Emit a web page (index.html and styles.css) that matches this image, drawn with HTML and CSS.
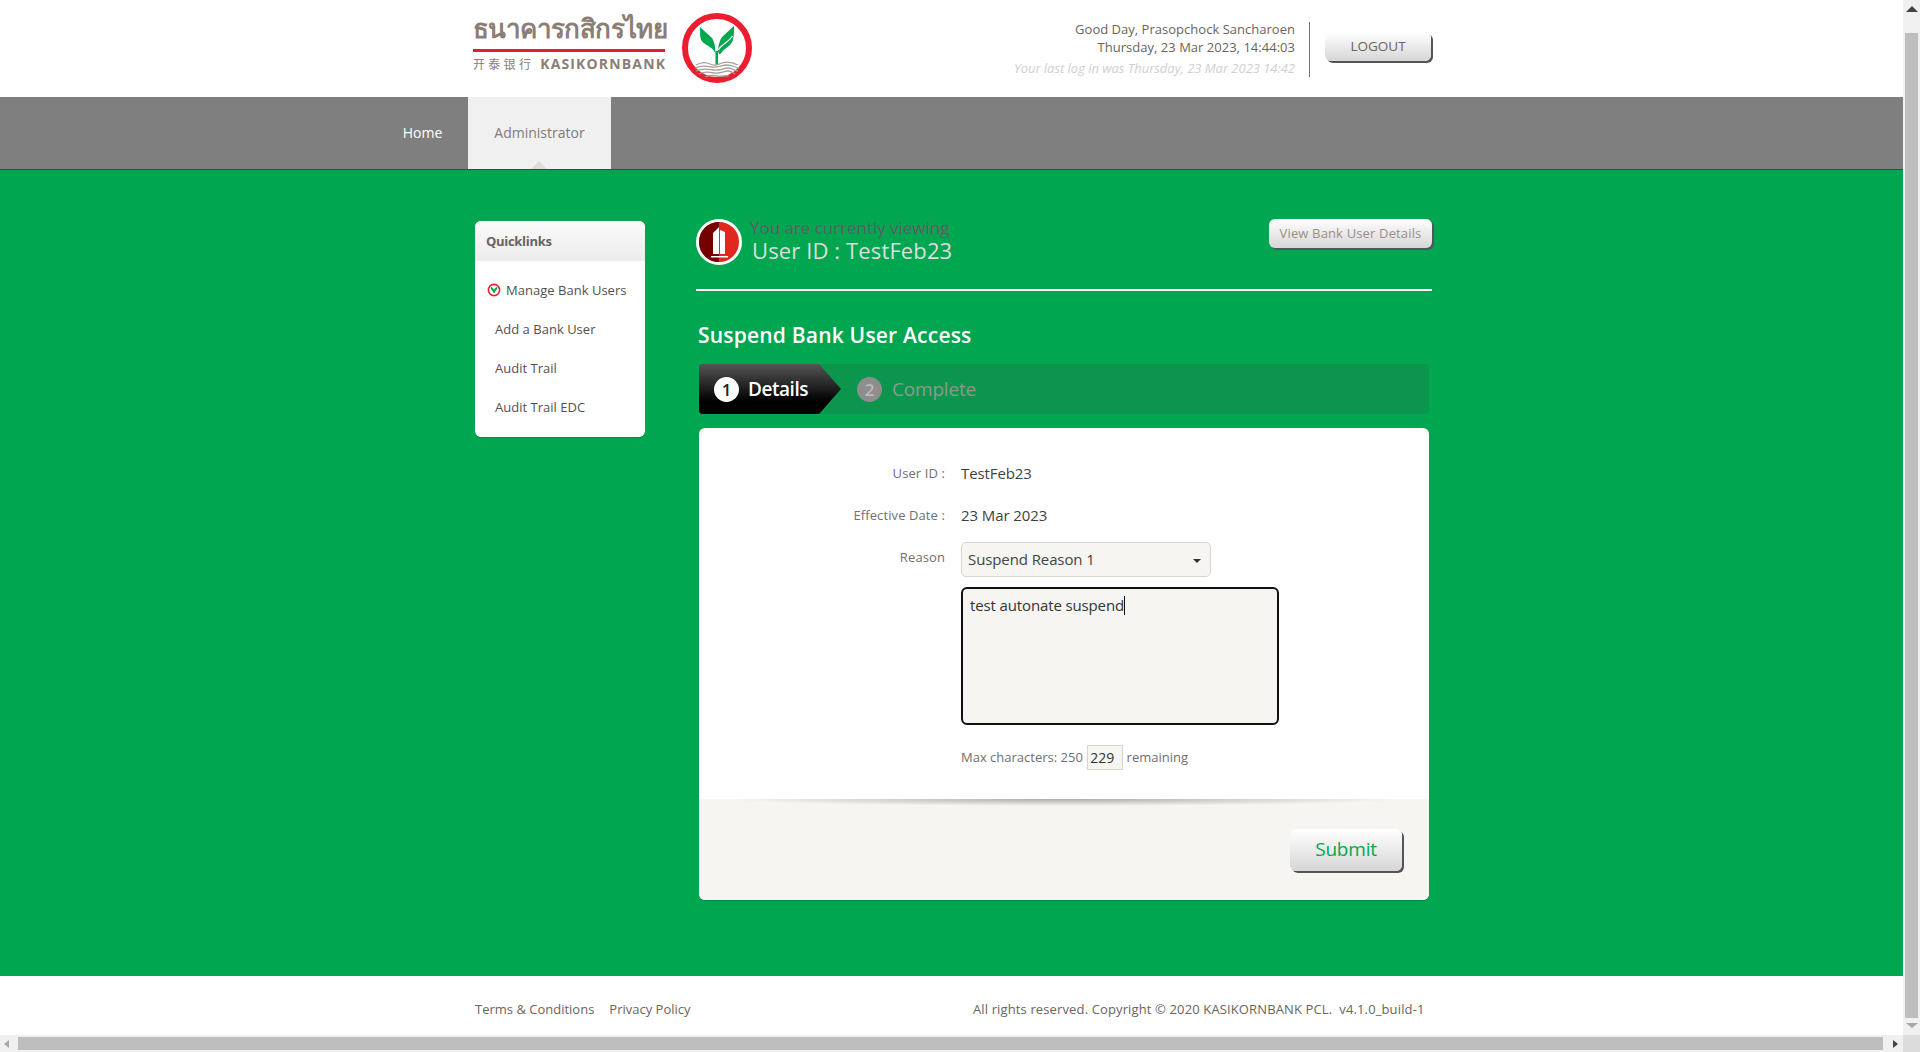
FILE: index.html
```html
<!DOCTYPE html>
<html lang="en">
<head>
<meta charset="utf-8">
<title>Suspend Bank User Access</title>
<link rel="stylesheet" href="styles.css">
</head>
<body>
<div class="viewport">
  <header class="header">
    <div class="logo">
      <div class="logo-words">
        <div class="logo-thai">ธนาคารกสิกรไทย</div>
        <div class="logo-rule"></div>
        <div class="logo-en"><span class="logo-cjk">开泰银行</span><span>KASIKORNBANK</span></div>
      </div>
      <svg class="logo-mark" viewBox="0 0 70 70" aria-hidden="true">
        <circle cx="35" cy="35" r="32" fill="#fff" stroke="#ed1c2e" stroke-width="6"/>
        <path d="M18 14L29 24C32 27 33.500 33 33.500 40C30 33 22 32 19 27C18 24 18 19 18 14Z" fill="#00a650"/>
        <path d="M52 13L41 23C37.500 27 36 33 36 40V52H33.500V38H36C37 42 38 42 40 39C43 35 49 33 51 27C52 23 52 18 52 13Z" fill="#00a650"/>
        <path d="M36.500 37C38 32 46 30 50.500 23" fill="none" stroke="#fff" stroke-width="1.300"/>
        <path d="M14 52C19 49 24 49 28 51S35 52 40 50 50 49 56 52M13 55C19 52 25 53 30 54S40 52 45 52 52 54 57 55M14 58C20 55 27 56 32 57S42 55 46 55 52 57 56 58M17 61C22 58 27 59 32 60S42 58 46 58 51 60 53 61M23 64C27 62 31 62 35 63S44 62 47 63" fill="none" stroke="#a89f99" stroke-width="1.300"/>
      </svg>
    </div>
    <div class="userinfo">
      <div class="userinfo-text">
        <div class="greeting">Good Day, Prasopchock Sancharoen</div>
        <div class="greeting">Thursday, 23 Mar 2023, 14:44:03</div>
        <div class="lastlog">Your last log in was Thursday, 23 Mar 2023 14:42</div>
      </div>
      <div class="userinfo-sep"></div>
      <button class="btn btn-logout">LOGOUT</button>
    </div>
  </header>

  <nav class="nav">
    <a class="nav-home">Home</a>
    <a class="nav-admin">Administrator</a>
  </nav>

  <main class="main">
    <aside class="quick">
      <div class="quick-head">Quicklinks</div>
      <ul class="quick-list">
        <li class="quick-item quick-current">
          <svg class="quick-icon" viewBox="0 0 14 14" aria-hidden="true">
            <circle cx="7" cy="7" r="5.600" fill="#fff" stroke="#ed1c2e" stroke-width="1.600"/>
            <path d="M3.500 3.800C5.500 4.500 6.600 5.500 7 7 7.500 5.500 8.500 4.500 10.500 3.800 10.500 6.500 8.500 7.500 7.500 10H6.500C5.500 7.500 3.500 6.500 3.500 3.800Z" fill="#00a650"/>
          </svg>
          Manage Bank Users
        </li>
        <li class="quick-item">Add a Bank User</li>
        <li class="quick-item">Audit Trail</li>
        <li class="quick-item">Audit Trail EDC</li>
      </ul>
    </aside>

    <section class="content">
      <div class="viewing">
        <svg class="viewing-icon" viewBox="0 0 46 46" aria-hidden="true">
          <circle cx="23" cy="23" r="21.500" fill="#e0281f" stroke="#fff" stroke-width="3"/>
          <path d="M23 3V43A20 20 0 0 1 23 3Z" fill="#750000"/>
          <path d="M17 35V14L23 8V35ZM24 35V11L29 13V35Z" fill="#fff"/>
          <path d="M15 37H32V38.500H15Z" fill="#fff"/>
        </svg>
        <div class="viewing-text">
          <div class="viewing-label">You are currently viewing</div>
          <div class="viewing-id">User ID : TestFeb23</div>
        </div>
        <button class="btn btn-view">View Bank User Details</button>
      </div>

      <div class="panel">
        <h1 class="title">Suspend Bank User Access</h1>
        <div class="steps">
          <div class="step step-active"><span class="step-num">1</span>Details</div>
          <div class="step step-next"><span class="step-num">2</span>Complete</div>
        </div>
        <div class="card">
          <div class="card-body">
            <div class="row row-id"><div class="label">User ID :</div><div class="value">TestFeb23</div></div>
            <div class="row row-date"><div class="label">Effective Date :</div><div class="value">23 Mar 2023</div></div>
            <div class="row row-reason">
              <div class="label">Reason</div>
              <div class="field">
                <div class="select">Suspend Reason 1<span class="select-arrow"></span></div>
                <div class="textarea">test autonate suspend<span class="caret"></span></div>
                <div class="counter">Max characters: 250 <span class="counter-box">229</span> remaining</div>
              </div>
            </div>
          </div>
          <div class="card-foot">
            <button class="btn btn-submit">Submit</button>
          </div>
        </div>
      </div>
    </section>
  </main>

  <footer class="footer">
    <div class="footer-links"><a>Terms &amp; Conditions</a><a>Privacy Policy</a></div>
    <div class="footer-copy">All rights reserved. Copyright © 2020 KASIKORNBANK PCL.&nbsp; v4.1.0_build-1</div>
  </footer>
</div>

<div class="vbar">
  <span class="arrow arrow-up"></span>
  <span class="vthumb"></span>
  <span class="arrow arrow-down"></span>
</div>
<div class="hbar">
  <span class="arrow arrow-left"></span>
  <span class="hthumb"></span>
  <span class="arrow arrow-right"></span>
</div>
<div class="corner"></div>
</body>
</html>
```
FILE: styles.css
```css
* { box-sizing: border-box; }
html, body { height: 100%; margin: 0; overflow: hidden; }
body {
  display: grid;
  grid-template-columns: 1903px 17px;
  grid-template-rows: 1035px 17px;
  font-family: "Open Sans", "Noto Sans", sans-serif;
  color: #555;
  background: #fff;
}
.viewport { display: flex; flex-direction: column; overflow: hidden; }

/* header */
.header { height: 97px; display: flex; padding-left: 470px; background: #fff; }
.logo { display: flex; padding-top: 13px; }
.logo-words { width: 196px; }
.logo-thai { height: 36px; font: 700 26px/30px "Noto Sans", "DejaVu Sans", sans-serif; color: #8c7d75; white-space: nowrap; letter-spacing: -.6px; padding-left: 3px; }
.logo-rule { height: 3px; margin: 0 1px 0 3px; background: #e0202f; }
.logo-en { display: flex; gap: 6px; margin: 4px 0 0 3px; font: 700 14px/16px "Open Sans", sans-serif; color: #8c7d75; letter-spacing: 1.150px; white-space: nowrap; }
.logo-cjk { font: 400 12px/16px "Noto Sans CJK SC", sans-serif; letter-spacing: 3.300px; }
.logo-mark { width: 70px; height: 70px; margin: 0 0 0 16px; }
.userinfo { width: 666px; margin-left: 13px; display: flex; justify-content: flex-end; }
.userinfo-text { margin-top: 21px; text-align: right; font-size: 13px; line-height: 17.500px; color: #6a6460; width: 400px; }
.greeting { letter-spacing: .02px; }
.lastlog { margin-top: 4px; line-height: 17px; font-style: italic; font-size: 13px; color: #cfcfcf; letter-spacing: -.03px; }
.userinfo-sep { width: 1px; height: 55px; margin: 22px 15px 0 14px; background: #7a6e68; }
.btn {
  display: block;
  padding: 0;
  border: 0;
  font-family: inherit;
  border-radius: 6px;
  background: linear-gradient(#fff, #d6d6d6);
  box-shadow: 2px 2px 0 #555;
  color: #6a6460;
}
.btn-logout { width: 106px; height: 29px; margin-top: 32px; padding-bottom: 2px; font-size: 13.500px; }

/* nav */
.nav { height: 73px; display: flex; padding-left: 377px; background: #7f7f7f; border-bottom: 1px solid #1a5c36; font-size: 14px; line-height: 72px; }
.nav-home { width: 91px; text-align: center; color: #fff; }
.nav-admin { position: relative; width: 143px; text-align: center; color: #807a78; background: #f0f0f0; }
.nav-admin::after { content: ""; position: absolute; left: 63px; bottom: 0; border: 8px solid transparent; border-top: 0; border-bottom-color: #e0dcdc; }

/* main */
.main { height: 806px; display: flex; padding: 51px 0 0 475px; background: #00a750; }
.quick { width: 170px; height: 216px; border-radius: 6px; background: #fff; overflow: hidden; box-shadow: 0 1px 1px rgba(0,0,0,.15); }
.quick-head { height: 40px; padding-left: 11px; background: linear-gradient(#fafafa, #ececec); font-size: 13px; font-weight: 700; line-height: 40px; color: #6a6460; letter-spacing: -.3px; }
.quick-list { margin: 0; padding: 10px 0 0; list-style: none; }
.quick-item { height: 39px; padding-left: 20px; font-size: 13px; line-height: 39px; color: #55504c; letter-spacing: .02px; white-space: nowrap; }
.quick-current { display: flex; align-items: center; gap: 5px; padding-left: 12px; }
.quick-icon { width: 14px; height: 14px; flex: none; margin-top: -2px; }

.content { width: 736px; margin-left: 51px; }
.viewing { height: 70px; display: flex; align-items: flex-start; border-bottom: 2px solid #fff; }
.viewing-icon { width: 46px; height: 46px; flex: none; margin-top: -2px; }
.viewing-text { width: 460px; margin-left: 8px; margin-top: -3px; }
.viewing-label { font-size: 17px; line-height: 20px; color: #665a60; letter-spacing: -.03px; }
.viewing-id { font-size: 22px; line-height: 25px; color: #dedede; padding-left: 2px; letter-spacing: .12px; }
.btn-view { width: 163px; height: 29px; margin: -2px 0 0 auto; padding-bottom: 1px; font-size: 13px; letter-spacing: .15px; color: #9a8f88; }

.panel { padding-left: 3px; width: 733px; }
.title { margin: 30px 0 0 -1px; font-size: 21px; font-weight: 600; line-height: 29px; color: #fff; letter-spacing: .2px; }
.steps { height: 50px; margin-top: 14px; display: flex; width: 730px; border-radius: 4px; background: #0c964d; }
.step { position: relative; display: flex; align-items: center; font-size: 19px; }
.step-num { width: 25px; height: 25px; border-radius: 50%; margin-right: 9px; text-align: center; font-size: 17px; font-weight: 600; line-height: 25px; }
.step-active { width: 142px; padding-left: 15px; color: #fff; font-weight: 600; letter-spacing: -.45px; background: linear-gradient(#555, #000 75%); clip-path: polygon(0 0, 120px 0, 142px 50%, 120px 100%, 0 100%); border-radius: 4px 0 0 4px; }
.step-active .step-num { background: #fff; color: #222; letter-spacing: 0; }
.step-next { margin-left: 16px; color: #8c9a8e; letter-spacing: -.2px; }
.step-next .step-num { background: #8e8e8e; color: #bbb; margin-right: 10px; }

.card { margin-top: 14px; width: 730px; height: 472px; border-radius: 6px; overflow: hidden; background: #fff; box-shadow: 0 1px 1px rgba(0,0,0,.2); }
.card-body { height: 371px; padding-top: 34px; }
.row { display: flex; font-size: 15px; }
.label { width: 246px; margin-right: 16px; text-align: right; font-size: 13px; color: #6f6f70; letter-spacing: .1px; }
.value { color: #3f3f3f; letter-spacing: -.1px; }
.row-id { height: 42px; line-height: 22px; }
.row-date { height: 38px; line-height: 22px; }
.row-reason { line-height: 20px; }
.row-reason .label { line-height: 30px; }
.select { position: relative; width: 250px; height: 35px; padding-left: 6px; border: 1px solid #d8d5cc; border-radius: 5px; background: #f6f5f1; font-size: 15px; line-height: 33px; color: #444; letter-spacing: -.1px; }
.select-arrow { position: absolute; right: 9px; top: 16px; border: 4px solid transparent; border-bottom: 0; border-top-color: #333; }
.textarea { width: 318px; height: 138px; margin-top: 10px; padding: 6px 7px; border: 2px solid #111; border-radius: 6px; background: #f6f5f1; font-size: 15px; line-height: 20px; color: #333; letter-spacing: -.13px; }
.caret { display: inline-block; width: 1px; height: 19px; vertical-align: -4px; background: #111; }
.counter { margin-top: 20px; font-size: 13px; line-height: 25px; color: #6f6f70; letter-spacing: 0; }
.counter-box { display: inline-block; width: 36px; height: 25px; margin: 0 0 0 1px; padding-left: 2px; border: 1px solid #d8d5cc; background: #f6f5f1; color: #333; font-size: 14px; line-height: 23px; vertical-align: top; }

.card-foot { position: relative; height: 101px; display: flex; justify-content: flex-end; padding: 30px 27px 0 0; background: #f6f5f1; }
.card-foot::before { content: ""; position: absolute; left: 30px; right: 30px; top: 0; height: 7px; background: radial-gradient(ellipse 50% 100% at 50% 0, rgba(0,0,0,.3), rgba(0,0,0,0)); }
.btn-submit { width: 112px; height: 42px; padding-bottom: 3px; font-size: 19px; color: #00a750; letter-spacing: -.2px; }

/* footer */
.footer { height: 59px; display: flex; padding: 0 0 0 475px; align-items: flex-start; font-size: 13px; line-height: 66px; color: #6a6460; background: #fff; }
.footer-links { width: 498px; display: flex; gap: 15px; }
.footer-copy { white-space: nowrap; letter-spacing: .13px; }

/* scrollbars */
.vbar, .hbar { position: relative; background: #f0f0f0; }
.vbar { display: flex; flex-direction: column; align-items: center; padding-top: 6px; }
.vthumb { width: 13px; height: 985px; margin-top: 21px; background: #bebebe; }
.hbar { display: flex; align-items: center; padding-left: 4px; }
.hthumb { width: 1865px; height: 13px; margin-left: 9px; background: #bebebe; }
.corner { background: #dcdcdc; }
.arrow { display: block; width: 0; height: 0; border: 4px solid transparent; }
.arrow-up { border-top: 0; border-bottom: 6px solid #444; border-left-width: 6px; border-right-width: 6px; }
.arrow-down { margin-top: 5px; border-bottom: 0; border-top: 5px solid #a8a8a8; border-left-width: 6px; border-right-width: 6px; }
.arrow-left { border-left: 0; border-right: 5px solid #a8a8a8; }
.arrow-right { margin-left: 10px; border-right: 0; border-left: 5px solid #444; }
```
